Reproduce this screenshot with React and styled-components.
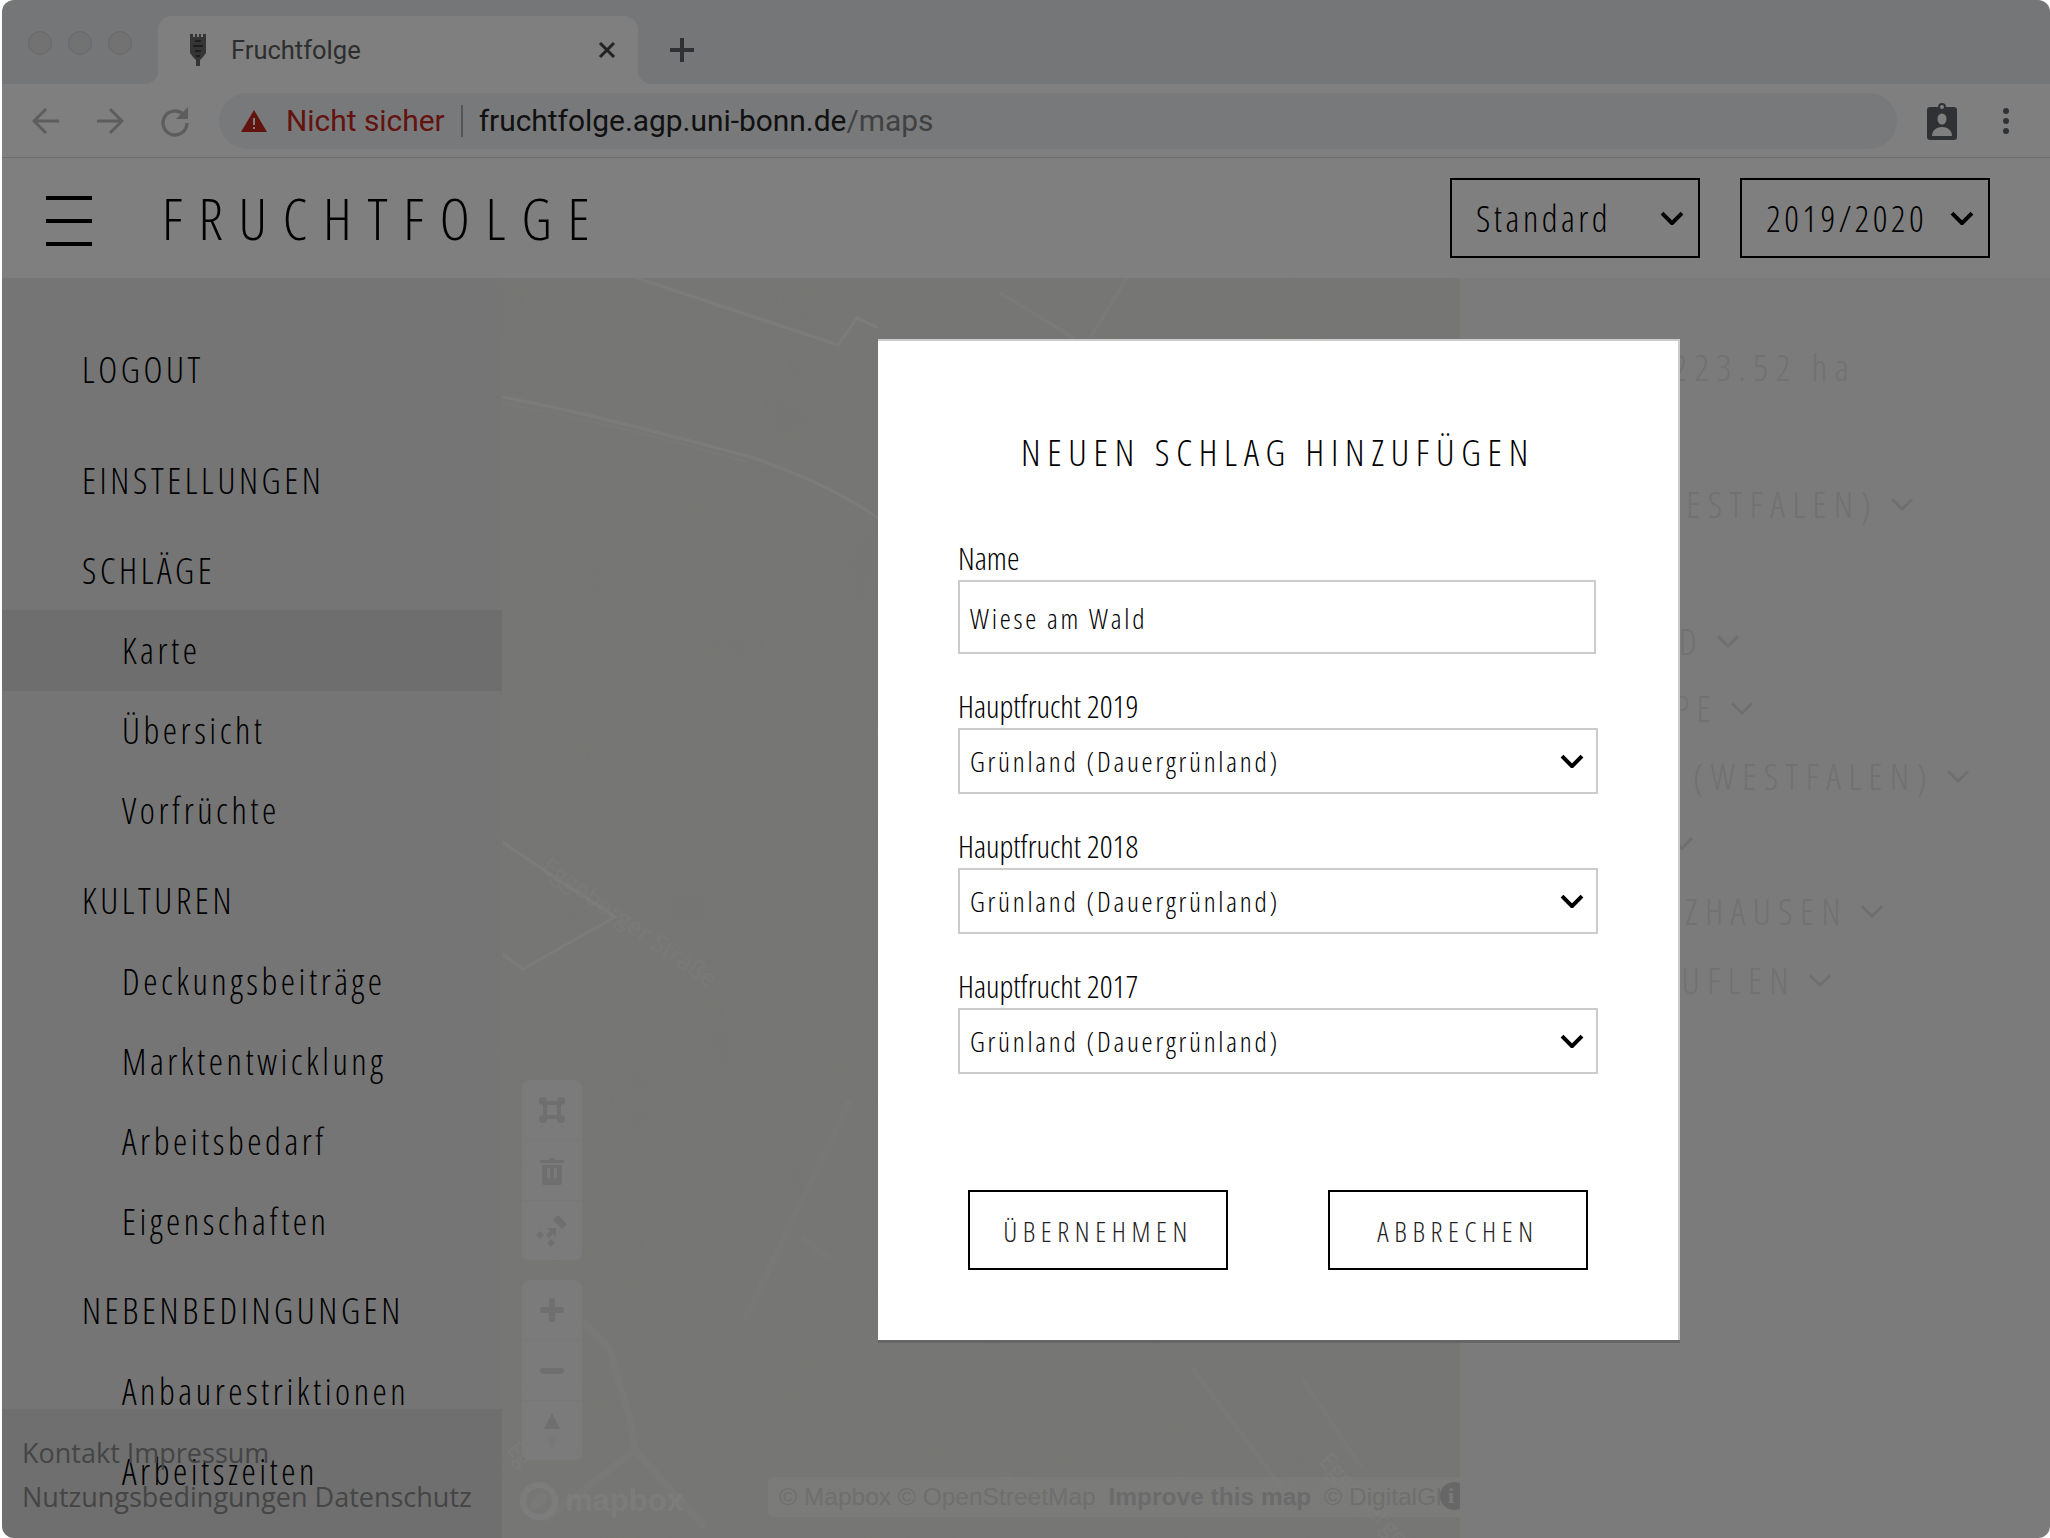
import React from 'react';
import styled, { createGlobalStyle } from 'styled-components';

const Global = createGlobalStyle`
  html, body { margin: 0; padding: 0; background: #fff; }
  #root { width: 2050px; height: 1538px; overflow: hidden; }
`;
const cond = `"Open Sans", "Liberation Sans", sans-serif`;
const Win = styled.div`
  position: relative; width: 2048px; height: 1538px; margin-left: 2px; overflow: hidden;
  border-radius: 12px; background: #fff; display: flex; flex-direction: column;
`;
const Tabs = styled.div`
  height: 84px; background: #ebecee; display: flex; align-items: flex-end; flex: none;
`;
const Lights = styled.div`
  width: 156px; height: 84px; display: flex; gap: 16px; padding: 31px 0 0 26px; box-sizing: border-box; flex: none;
`;
const Light = styled.span`
  width: 24px; height: 24px; border-radius: 50%; background: #e4e4e4; border: 1px solid #d0d0d0; box-sizing: border-box;
`;
const Tab = styled.div`
  position: relative; width: 480px; height: 68px; background: #fff; border-radius: 14px 14px 0 0; display: flex; align-items: center;
  font: 400 25.5px Roboto, sans-serif; color: #5b5c5e; padding: 0 22px 0 30px; box-sizing: border-box;
  span { margin-left: 23px; flex: 1; }
  &::before, &::after { content: ""; position: absolute; bottom: 0; width: 14px; height: 14px; }
  &::before { left: -14px; background: radial-gradient(circle at 0 0, #ebecee 14px, #fff 14.5px); }
  &::after { right: -14px; background: radial-gradient(circle at 100% 0, #ebecee 14px, #fff 14.5px); }
`;
const Plus = styled.span`
  margin: 0 0 9px 32px; height: 50px; display: flex; align-items: center;
`;
const Bar = styled.div`
  height: 73px; background: #fff; border-bottom: 1px solid #dcdcdc; flex: none; display: flex; align-items: center; padding-left: 30px;
`;
const Nav = styled.div`display:flex; gap: 36px; width: 187px; flex:none; align-items:center;`;
const Omni = styled.div`
  width: 1678px; height: 56px; border-radius: 28px; background: #f1f3f4; display: flex; align-items: center;
  font: 400 29.9px Roboto, sans-serif; padding-left: 22px; box-sizing: border-box; color: #222;
`;
const Warn = styled.span`color: #c5271c; margin-left: 19px;`;
const Sep = styled.span`width: 2px; height: 32px; background: #aaa; margin: 0 16px;`;
const Faint = styled.span`color: #808285;`;
const Right = styled.div`display:flex; align-items:center; margin-left: 30px; gap: 45px;`;
const Head = styled.header`
  height: 120px; background: #fff; flex: none; display: flex; align-items: center; padding-left: 44px; box-sizing: border-box;
`;
const Burger = styled.div`
  width: 46px; height: 50px; display: flex; flex-direction: column; justify-content: space-between; flex: none; margin: 6px 70px 0 0;
  i { display: block; height: 4px; background: #000; }
`;
const Brand = styled.div`
  font: 300 57px ${cond}; font-stretch: 75%; letter-spacing: 15.8px; color: #000; flex: 1; line-height: 60px;
`;
const HeadSel = styled.div`
  width: 250px; height: 80px; border: 2.5px solid #000; box-sizing: border-box; display: flex; align-items: center;
  padding: 0 14px 0 24px; justify-content: space-between; font: 300 36px ${cond}; font-stretch: 75%; letter-spacing: 3.5px; margin-right: ${p => p.$mr}px;
`;
const Body = styled.div`flex: 1; display: flex; min-height: 0;`;
const Side = styled.nav`
  width: 500px; flex: none; background: #ebebeb; position: relative; display: flex; flex-direction: column; overflow: hidden; padding-top: 53px; box-sizing: border-box;
`;
const Sec = styled.div`
  font: 300 36px ${cond}; font-stretch: 75%; letter-spacing: 3.6px; color: #000; padding-left: 80px; height: ${p => p.$h || 80}px; line-height: 78px; flex: none;
  margin-top: ${p => p.$mt || 0}px;
`;
const Item = styled.div`
  font: 300 36px ${cond}; font-stretch: 75%; letter-spacing: 3.55px; color: #000; padding-left: 120px; height: ${p => p.$active ? 81 : 80}px; line-height: ${p => p.$active ? 82 : 79}px; flex: none; white-space: nowrap;
  background: ${p => p.$active ? '#dcdcdc' : 'transparent'};
`;
const Foot = styled.div`
  position: absolute; left: 0; right: 0; bottom: 0; height: 129px; background: rgba(0,0,0,.055); padding: 22px 0 0 20px; box-sizing: border-box; white-space: nowrap;
  font: 400 27px/44px "Open Sans", sans-serif; color: #8a8a8a;
`;
const MapArea = styled.div`width: 958px; flex: none; position: relative; background: #edede9; overflow: hidden;`;
const MapSvg = styled.svg`position: absolute; inset: 0; width: 100%; height: 100%;`;
const Tools = styled.div`
  position: absolute; left: 20px; top: ${p => p.$t}px; width: 60px; background: #f7f7f6; border-radius: 8px; display: flex; flex-direction: column;
`;
const ToolBtn = styled.div`
  height: 60px; display: flex; align-items: center; justify-content: center; border-top: ${p => p.$first ? 'none' : '1px solid #f0f0ee'}; box-sizing: border-box;
`;
const Attrib = styled.div`
  position: absolute; right: 0; bottom: 21px; width: 692px; height: 40px; background: rgba(255,255,255,.5); border-radius: 6px 0 0 6px; overflow: hidden; white-space: nowrap;
  font: 400 24.5px/40px "Liberation Sans", sans-serif; color: #dedede; padding-left: 11px; box-sizing: border-box;
  b { margin: 0 6px; color: #d6d6d6; }
`;
const InfoDot = styled.span`
  position: absolute; right: -8px; top: 5px; width: 28px; height: 28px; border-radius: 50%; background: #cfcfcf; color: #f4f4f4;
  font: 700 22px/28px "Liberation Serif", serif; padding-left: 8px; box-sizing: border-box;
`;
const Logo = styled.div`
  position: absolute; left: 18px; bottom: 18px; display: flex; align-items: center; gap: 7px; font: 700 31px "Liberation Sans", sans-serif; color: rgba(255,255,255,.7);
`;
const Panel = styled.aside`flex: 1; background: #f7f7f7; position: relative; overflow: hidden;`;
const PanelRow = styled.div`
  position: absolute; top: ${p => p.$y}px; right: ${p => p.$r}px; display: flex; align-items: center; gap: 12px; white-space: nowrap;
  font: 300 36px ${cond}; font-stretch: 75%; letter-spacing: 7.5px; color: #e2e2e2;
`;
const Overlay = styled.div`
  position: absolute; inset: 0; background: rgba(0,0,0,.5); padding: 339px 0 0 876px; box-sizing: border-box;
`;
const Modal = styled.div`
  width: 802px; height: 1001px; box-sizing: border-box; background: #fff; border: 1px solid #ccc; border-width: 2px 2px 0 0; box-shadow: 0 3px 0 #666;
  padding: 84px 0 0 80px;
`;
const MTitle = styled.h2`
  margin: 0 0 0 -80px; font: 300 37px/54px ${cond}; font-stretch: 75%; letter-spacing: 6.75px; text-align: center; color: #000; height: 54px;
`;
const Field = styled.div`margin-top: ${p => p.$mt}px; width: 640px;`;
const FLabel = styled.label`display: block; font: 300 31.6px/33px ${cond}; font-stretch: 75%; color: #000; margin: 0 0 6px 0;`;
const Input = styled.div`
  height: 74px; width: 638px; border: 2px solid #ccc; box-sizing: border-box; display: flex; align-items: center; padding: 1px 10px 0;
  font: 300 28px ${cond}; font-stretch: 75%; letter-spacing: 2.75px; color: #000;
`;
const Sel = styled(Input)`
  height: 66px; width: 640px; justify-content: space-between; padding: 0 12px 0 10px;
`;
const Buttons = styled.div`display: flex; gap: 100px; margin: 116px 0 0 10px;`;
const Btn = styled.button`
  width: 260px; height: 80px; border: 2.5px solid #000; background: #fff; box-sizing: border-box;
  font: 300 28px ${cond}; font-stretch: 75%; letter-spacing: 5.6px; color: #222; padding: 1px 0 0;
`;

const Chev = ({ w = 24, sw = 4, c = '#000' }) => (
  <svg width={w} height={w * .6} viewBox="0 0 24 14" fill="none" stroke={c} strokeWidth={sw}><path d="M2 2l10 10 10-10" /></svg>
);
const panelRows = [
  ['FLÄCHE: 1223.52 ha', 343, 194, false],
  ['HAUS (WESTFALEN)', 480, 136, true],
  ['BERGLAND', 617, 310, true],
  ['SCHAPE', 684, 296, true],
  ['HAUS (WESTFALEN)', 752, 80, true],
  ['SCHLOSS', 819, 356, true],
  ['WITZHAUSEN', 887, 166, true],
  ['AUFLEN', 956, 218, true],
];
const ic = '#dedede';

export default function App() {
  return (
    <>
      <Global />
      <Win>
        <Tabs>
          <Lights><Light /><Light /><Light /></Lights>
          <Tab>
            <svg width="20" height="34" viewBox="0 0 20 34">
              <path d="M2 1h3v3h2V1h2v3h2V1h2v3h2V1h3v19l-3 4-3 3v6h-4v-6l-3-3-3-4z" fill="#6b6b6b" />
              <path d="M7 7h6v2H7zM5 12h10v2H5zM7 17h6v2H7zM8 22h4v2H8z" fill="#3d3d3d" />
            </svg>
            <span>Fruchtfolge</span>
            <svg width="18" height="18" viewBox="0 0 18 18" stroke="#444" strokeWidth="3"><path d="M2 2l14 14M16 2L2 16" /></svg>
          </Tab>
          <Plus><svg width="24" height="24" viewBox="0 0 24 24" stroke="#5f6368" strokeWidth="4"><path d="M12 0v24M0 12h24" /></svg></Plus>
        </Tabs>
        <Bar>
          <Nav>
            <svg width="28" height="28" viewBox="0 0 28 28" fill="none" stroke="#bbb" strokeWidth="3"><path d="M27 14H2M14 2L2 14l12 12" /></svg>
            <svg width="28" height="28" viewBox="0 0 28 28" fill="none" stroke="#bbb" strokeWidth="3"><path d="M1 14h25M14 2l12 12-12 12" /></svg>
            <svg width="30" height="32" viewBox="0 0 30 32" fill="none" stroke="#bbb" strokeWidth="3.4"><path d="M27 18a12 12 0 1 1-3.5-8.5" /><path d="M28 2v12H16z" fill="#bbb" stroke="none" /></svg>
          </Nav>
          <Omni>
            <svg width="26" height="22" viewBox="0 0 26 22"><path d="M13 0l13 22H0z" fill="#c5271c" /><path d="M12 8h2v7h-2zM12 17h2v2h-2z" fill="#fff" /></svg>
            <Warn>Nicht sicher</Warn><Sep />fruchtfolge.agp.uni-bonn.de<Faint>/maps</Faint>
          </Omni>
          <Right>
            <svg width="30" height="38" viewBox="0 0 30 38"><path fillRule="evenodd" d="M3 5h8a4 4 0 0 1 8 0h8a3 3 0 0 1 3 3v27a3 3 0 0 1-3 3H3a3 3 0 0 1-3-3V8a3 3 0 0 1 3-3zM15 3a2 2 0 1 0 0 4 2 2 0 0 0 0-4z" fill="#5f6368" /><ellipse cx="15" cy="17" rx="4.5" ry="5.5" fill="#fff" /><path d="M5 34c0-6 5-9 10-9s10 3 10 9z" fill="#fff" /></svg>
            <svg width="8" height="28" viewBox="0 0 8 28" fill="#5f6368"><circle cx="4" cy="4" r="3" /><circle cx="4" cy="14" r="3" /><circle cx="4" cy="24" r="3" /></svg>
          </Right>
        </Bar>
        <Head>
          <Burger><i /><i /><i /></Burger>
          <Brand>FRUCHTFOLGE</Brand>
          <HeadSel $mr={40}>Standard<Chev /></HeadSel>
          <HeadSel $mr={60}>2019/2020<Chev /></HeadSel>
        </Head>
        <Body>
          <Side>
            <Sec>LOGOUT</Sec>
            <Sec $mt={31}>EINSTELLUNGEN</Sec>
            <Sec $mt={10} $h={78}>SCHLÄGE</Sec>
            <Item $active>Karte</Item>
            <Item>Übersicht</Item>
            <Item>Vorfrüchte</Item>
            <Sec $mt={11}>KULTUREN</Sec>
            <Item>Deckungsbeiträge</Item>
            <Item>Marktentwicklung</Item>
            <Item>Arbeitsbedarf</Item>
            <Item>Eigenschaften</Item>
            <Sec $mt={10}>NEBENBEDINGUNGEN</Sec>
            <Item>Anbaurestriktionen</Item>
            <Item>Arbeitszeiten</Item>
            <Foot>Kontakt Impressum<br />Nutzungsbedingungen Datenschutz</Foot>
          </Side>
          <MapArea>
            <MapSvg viewBox="0 0 958 1260" fill="none" stroke="#fff" strokeWidth="3">
              <defs>
                <filter id="grain"><feTurbulence type="fractalNoise" baseFrequency="0.012" numOctaves="4" seed="4" /><feColorMatrix values="0 0 0 0 .7  0 0 0 0 .7  0 0 0 0 .66  .9 0 0 0 -.25" /></filter>
              </defs>
              <rect width="958" height="1260" filter="url(#grain)" stroke="none" opacity=".2" />
              <path d="M0 119C90 136 170 158 245 178C290 192 340 215 376 240" opacity=".6" />
              <path d="M0 125C90 142 170 162 245 184" strokeWidth="1.5" opacity=".3" />
              <path d="M135 0L336 67L355 40L376 50" opacity=".6" />
              <path d="M498 15l74 45M625 0l-37 60" opacity=".4" />
              <path d="M0 564L113 639L21 691L0 676" opacity=".55" />
              <path d="M80 1042l28 30 20 70 5 30M133 1172l70 78M133 1172l-90 70" strokeWidth="7" opacity=".25" />
              <path d="M348 822l-105 220M300 960l28 20" strokeWidth="6" opacity=".2" />
              <path d="M690 1090l90 120M800 1100l60 90" strokeWidth="4" opacity=".25" />
              <text x="38" y="592" fill="#fff" stroke="none" opacity=".4" fontFamily="Open Sans" fontSize="24" transform="rotate(35 38 592)">Eggeberger Straße</text>
              <text x="816" y="1184" fill="#fff" stroke="none" opacity=".5" fontFamily="Open Sans" fontSize="24" transform="rotate(47 816 1184)">Eggeberger</text>
              <text x="4" y="1172" fill="#fff" stroke="none" opacity=".5" fontFamily="Open Sans" fontSize="22" transform="rotate(50 4 1172)">Eg</text>
            </MapSvg>
            <Tools $t={802}>
              <ToolBtn $first><svg width="26" height="26" viewBox="0 0 26 26" fill={ic}><path fillRule="evenodd" d="M4 4h18v18H4zM8 8v10h10V8z" /><circle cx="4" cy="4" r="4" /><circle cx="22" cy="4" r="4" /><circle cx="4" cy="22" r="4" /><circle cx="22" cy="22" r="4" /></svg></ToolBtn>
              <ToolBtn><svg width="26" height="28" viewBox="0 0 26 28" fill={ic}><path fillRule="evenodd" d="M1 3h8l4-2 4 2h8v3H1zM3 8h20v18a2 2 0 0 1-2 2H5a2 2 0 0 1-2-2zM8 11v10h3V11zM15 11v10h3V11z" /></svg></ToolBtn>
              <ToolBtn><svg width="34" height="34" viewBox="0 0 34 34" fill={ic}><path d="M18 6l5-5 9 9-5 5zM1 21l4-4 4 4-4 4zM12 29l4-4 4 4-4 4zM12 14h9v9l-3-3-4 4-3-3 4-4z" /></svg></ToolBtn>
            </Tools>
            <Tools $t={1002}>
              <ToolBtn $first><svg width="24" height="24" viewBox="0 0 24 24" fill={ic}><rect x="9" width="6" height="24" rx="2" /><rect y="9" width="24" height="6" rx="2" /></svg></ToolBtn>
              <ToolBtn><svg width="24" height="6" viewBox="0 0 24 6" fill={ic}><rect width="24" height="6" rx="3" /></svg></ToolBtn>
              <ToolBtn><svg width="16" height="36" viewBox="0 0 16 36"><path d="M8 0l8 16H0z" fill={ic} /><path d="M8 36L2 24h12z" fill="#f0f0ee" /></svg></ToolBtn>
            </Tools>
            <Logo><svg width="38" height="38" viewBox="0 0 38 38"><circle cx="19" cy="19" r="16" fill="none" stroke="#fff" strokeOpacity=".7" strokeWidth="6" /><path d="M11 27c0-11 5-16 16-16 0 11-5 16-16 16z" fill="#fff" fillOpacity=".3" /></svg>mapbox</Logo>
            <Attrib>© Mapbox © OpenStreetMap <b>Improve this map</b> © DigitalGlobe<InfoDot>i</InfoDot></Attrib>
          </MapArea>
          <Panel>
            {panelRows.map(([t, y, r, c]) => (
              <PanelRow key={y} $y={y - 278} $r={r}>{t}{c && <Chev c="#dedede" sw={3} />}</PanelRow>
            ))}
          </Panel>
        </Body>
        <Overlay>
          <Modal>
            <MTitle>NEUEN SCHLAG HINZUFÜGEN</MTitle>
            <Field $mt={62}><FLabel>Name</FLabel><Input>Wiese am Wald</Input></Field>
            <Field $mt={35}><FLabel>Hauptfrucht 2019</FLabel><Sel>Grünland (Dauergrünland)<Chev /></Sel></Field>
            <Field $mt={35}><FLabel>Hauptfrucht 2018</FLabel><Sel>Grünland (Dauergrünland)<Chev /></Sel></Field>
            <Field $mt={35}><FLabel>Hauptfrucht 2017</FLabel><Sel>Grünland (Dauergrünland)<Chev /></Sel></Field>
            <Buttons><Btn>ÜBERNEHMEN</Btn><Btn>ABBRECHEN</Btn></Buttons>
          </Modal>
        </Overlay>
      </Win>
    </>
  );
}
